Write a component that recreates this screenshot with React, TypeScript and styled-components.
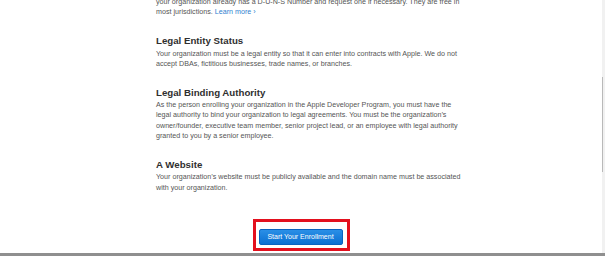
import type { ReactNode } from "react";
import styled, { createGlobalStyle } from "styled-components";

const GlobalStyle = createGlobalStyle`
  html, body {
    margin: 0;
    padding: 0;
    background: #ffffff;
  }
  body {
    font-family: "Liberation Sans", Arial, Helvetica, sans-serif;
    -webkit-font-smoothing: antialiased;
  }
`;

const Window = styled.div`
  width: 605px;
  height: 256px;
  display: flex;
  flex-direction: column;
  overflow: hidden;
`;

const Viewport = styled.div`
  flex: 1;
  display: flex;
  min-height: 0;
`;

const Main = styled.div`
  flex: 1;
  display: flex;
  flex-direction: column;
  overflow: hidden;
`;

const Content = styled.div`
  margin-top: -3px;
  padding-left: 156px;
  display: flex;
  flex-direction: column;
  gap: 16.5px;
`;

const Block = styled.section`
  display: flex;
  flex-direction: column;
`;

const Heading = styled.h2`
  margin: 0 0 1.5px;
  font-size: 9.7px;
  line-height: 13px;
  font-weight: 700;
  color: #2f2f2f;
`;

const Body = styled.p`
  margin: 0;
  font-size: 7.15px;
  line-height: 10.3px;
  color: #555555;
  white-space: nowrap;
`;

const Line = styled.span`
  display: block;
`;

const Link = styled.a`
  color: #2f7fd0;
  text-decoration: none;
`;

const Actions = styled.div`
  display: flex;
  justify-content: center;
  margin-top: 26px;
`;

const Highlight = styled.div`
  border: 3px solid #e3101e;
  padding: 7px 4px 3px 3px;
  display: flex;
`;

const EnrollButton = styled.button`
  width: 84px;
  height: 16px;
  padding: 0;
  border: 1px solid #0a63bf;
  border-radius: 2px;
  background: linear-gradient(#2a8fe6, #0b70d2);
  color: #ffffff;
  font-family: "Liberation Sans", Arial, sans-serif;
  font-size: 7px;
  line-height: 14px;
  cursor: pointer;
`;

const ScrollTrack = styled.div`
  width: 3px;
  background: #f1f1f1;
  display: flex;
  flex-direction: column;
`;

const ScrollThumb = styled.div`
  margin-top: 77px;
  height: 95px;
  width: 1px;
  background: #b9b9b9;
`;

const BottomEdge = styled.div`
  height: 3px;
  background: #8f8f8f;
`;

interface Section {
  title?: string;
  lines: ReactNode[];
}

const sections: Section[] = [
  {
    lines: [
      "your organization already has a D-U-N-S Number and request one if necessary. They are free in",
      <>
        most jurisdictions. <Link>Learn more ›</Link>
      </>,
    ],
  },
  {
    title: "Legal Entity Status",
    lines: [
      "Your organization must be a legal entity so that it can enter into contracts with Apple. We do not",
      "accept DBAs, fictitious businesses, trade names, or branches.",
    ],
  },
  {
    title: "Legal Binding Authority",
    lines: [
      "As the person enrolling your organization in the Apple Developer Program, you must have the",
      "legal authority to bind your organization to legal agreements. You must be the organization’s",
      "owner/founder, executive team member, senior project lead, or an employee with legal authority",
      "granted to you by a senior employee.",
    ],
  },
  {
    title: "A Website",
    lines: [
      "Your organization’s website must be publicly available and the domain name must be associated",
      "with your organization.",
    ],
  },
];

function App() {
  return (
    <>
      <GlobalStyle />
      <Window>
        <Viewport>
          <Main>
            <Content>
              {sections.map((section, i) => (
                <Block key={i}>
                  {section.title && <Heading>{section.title}</Heading>}
                  <Body>
                    {section.lines.map((line, j) => (
                      <Line key={j}>{line}</Line>
                    ))}
                  </Body>
                </Block>
              ))}
            </Content>
            <Actions>
              <Highlight>
                <EnrollButton>Start Your Enrollment</EnrollButton>
              </Highlight>
            </Actions>
          </Main>
          <ScrollTrack>
            <ScrollThumb />
          </ScrollTrack>
        </Viewport>
        <BottomEdge />
      </Window>
    </>
  );
}
export default App;
